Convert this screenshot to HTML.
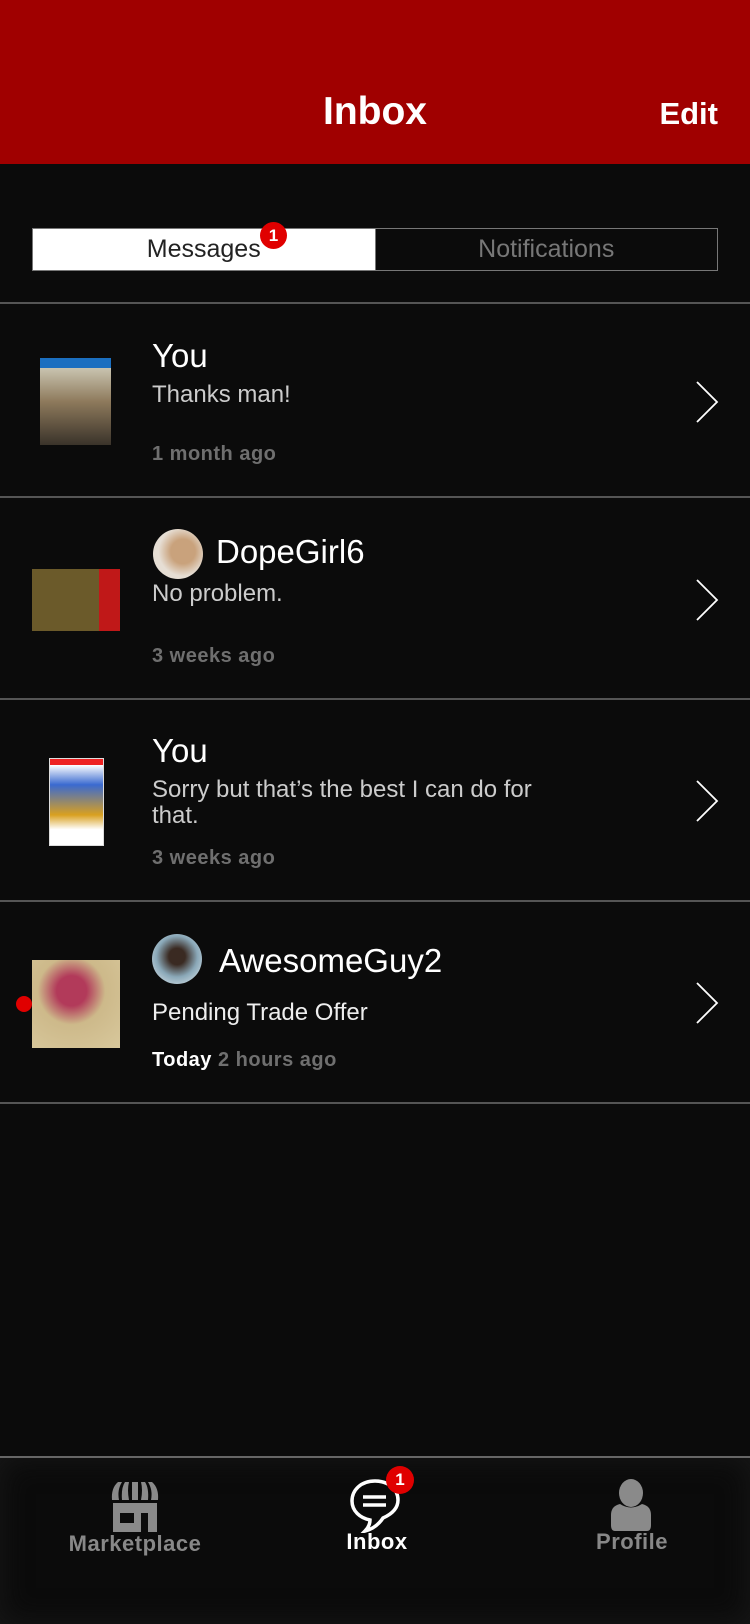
<!DOCTYPE html>
<html><head><meta charset="utf-8"><style>
*{margin:0;padding:0;box-sizing:border-box}
body{width:750px;height:1624px;background:#0b0b0b;font-family:"Liberation Sans",sans-serif;position:relative;overflow:hidden;color:#fff}
.abs{position:absolute}
.hdr{left:0;top:0;width:750px;height:164px;background:#a00000}
.title{left:0;width:750px;top:90px;text-align:center;font-size:39px;font-weight:bold}
.edit{right:32px;top:96px;font-size:31px;font-weight:bold}
.tabs{left:32px;top:228px;width:686px;height:43px;border:1px solid #777;display:flex}
.tab{flex:1;text-align:center;font-size:25px;line-height:41px}
.t1{background:#fff;color:#222}
.t2{color:#777;border-left:1px solid #777}
.badge{background:#e00000;border-radius:50%;color:#fff;font-weight:bold;text-align:center}
.hr{left:0;width:750px;height:2px;background:#555}
.name{font-size:33px;left:152px}
.sub{font-size:24px;color:#ccc;left:152px;line-height:26px}
.time{font-size:20px;font-weight:bold;color:#6f6f6f;left:152px;letter-spacing:.5px}
.chev{left:694px;width:26px;height:44px}
.av{border-radius:50%;width:50px;height:50px}
.nav{left:0;top:1458px;width:750px;height:166px;background:#0b0b0b;box-shadow:inset 0 0 30px #181818}
.lbl{font-size:22px;font-weight:bold;color:#888;text-align:center;width:200px;letter-spacing:.5px}
</style></head><body>
<div class="abs hdr"></div>
<div class="abs title">Inbox</div>
<div class="abs edit">Edit</div>
<div class="abs tabs"><div class="tab t1">Messages</div><div class="tab t2">Notifications</div></div>
<div class="abs badge" style="left:260px;top:222px;width:27px;height:27px;font-size:17px;line-height:27px">1</div>
<div class="abs hr" style="top:302px"></div>
<div class="abs hr" style="top:496px"></div>
<div class="abs hr" style="top:698px"></div>
<div class="abs hr" style="top:900px"></div>
<div class="abs hr" style="top:1102px"></div>

<!-- row1 -->
<div class="abs" style="left:40px;top:358px;width:71px;height:87px;background:linear-gradient(#1b6fc0 0 10px,#c9c4b0 10px,#8e7a5c 50%,#3a332a)"></div>
<div class="abs name" style="top:337px">You</div>
<div class="abs sub" style="top:382px">Thanks man!</div>
<div class="abs time" style="top:443px">1 month ago</div>
<svg class="abs chev" style="top:380px" viewBox="0 0 26 44"><path d="M3 2 L23 22 L3 42" fill="none" stroke="#fff" stroke-width="1.8"/></svg>

<!-- row2 -->
<div class="abs" style="left:32px;top:569px;width:88px;height:62px;background:linear-gradient(90deg,#6b5a2a 0 76%,#c01818 76%)"></div>
<div class="abs av" style="left:153px;top:529px;background:radial-gradient(circle at 60% 45%,#c9a27c 0 30%,#e6ded4 60%)"></div>
<div class="abs name" style="left:216px;top:533px">DopeGirl6</div>
<div class="abs sub" style="top:581px">No problem.</div>
<div class="abs time" style="top:645px">3 weeks ago</div>
<div class="abs" style="left:694px;top:578px"><svg class="chev" viewBox="0 0 26 44"><path d="M3 2 L23 22 L3 42" fill="none" stroke="#fff" stroke-width="1.8"/></svg></div>

<!-- row3 -->
<div class="abs" style="left:49px;top:758px;width:55px;height:88px;background:linear-gradient(#e22 0 6px,#fff 6px,#3a6ad0 30%,#d9a020 65%,#fff 82%);border:1px solid #ddd"></div>
<div class="abs name" style="top:732px">You</div>
<div class="abs sub" style="top:777px">Sorry but that’s the best I can do for<br>that.</div>
<div class="abs time" style="top:847px">3 weeks ago</div>
<div class="abs" style="left:694px;top:779px"><svg class="chev" viewBox="0 0 26 44"><path d="M3 2 L23 22 L3 42" fill="none" stroke="#fff" stroke-width="1.8"/></svg></div>

<!-- row4 -->
<div class="abs" style="left:16px;top:996px;width:16px;height:16px;border-radius:50%;background:#e00000"></div>
<div class="abs" style="left:32px;top:960px;width:88px;height:88px;background:radial-gradient(circle at 45% 35%,#b23a5a 0 20%,#cdb98a 45%,#d8c89c)"></div>
<div class="abs av" style="left:152px;top:934px;background:radial-gradient(circle at 50% 45%,#3a2a22 0 22%,#8aa8b8 55%,#e8eef2)"></div>
<div class="abs name" style="left:219px;top:942px">AwesomeGuy2</div>
<div class="abs sub" style="top:1000px;color:#eee">Pending Trade Offer</div>
<div class="abs time" style="top:1049px"><span style="color:#fff">Today</span> 2 hours ago</div>
<div class="abs" style="left:694px;top:981px"><svg class="chev" viewBox="0 0 26 44"><path d="M3 2 L23 22 L3 42" fill="none" stroke="#fff" stroke-width="1.8"/></svg></div>

<!-- nav -->
<div class="abs nav"></div>
<div class="abs hr" style="top:1456px;height:2px;background:#666"></div>
<svg class="abs" style="left:110px;top:1480px" width="50" height="52" viewBox="0 0 50 52">
<g fill="#8a8a8a"><path d="M2 20 Q1 8 8 2 L12 2 Q7 10 9 20 Z"/><path d="M12 20 Q11 8 15 2 L19 2 Q17 10 19 20 Z"/><path d="M22 20 L22 2 L28 2 L28 20 Z"/><path d="M31 20 Q33 10 31 2 L35 2 Q39 8 38 20 Z"/><path d="M41 20 Q43 10 38 2 L42 2 Q49 8 48 20 Z"/>
<path d="M3 23 H47 V52 H38 V33 H31 V52 H3 Z M10 33 V43 H24 V33 Z" fill-rule="evenodd"/></g></svg>
<div class="abs lbl" style="left:35px;top:1531px">Marketplace</div>
<svg class="abs" style="left:348px;top:1477px" width="54" height="56" viewBox="0 0 54 56">
<path d="M27 4 C13 4 4 13 4 24 C4 34 12 41 22 43 C22 47 20 51 17 54 C25 52 31 47 35 41 C44 37 50 31 50 23 C50 12 40 4 27 4 Z" fill="none" stroke="#fff" stroke-width="3.5"/>
<path d="M15 20 H38 M15 28 H38" stroke="#fff" stroke-width="3.5"/></svg>
<div class="abs badge" style="left:386px;top:1466px;width:28px;height:28px;font-size:17px;line-height:28px">1</div>
<div class="abs lbl" style="left:277px;top:1529px;color:#fff">Inbox</div>
<svg class="abs" style="left:611px;top:1479px" width="40" height="52" viewBox="0 0 40 52">
<g fill="#8a8a8a"><ellipse cx="20" cy="14" rx="12" ry="14"/><path d="M4 52 Q0 52 0 46 L0 36 Q0 27 9 25 Q20 32 31 25 Q40 27 40 36 L40 46 Q40 52 36 52 Z"/></g></svg>
<div class="abs lbl" style="left:532px;top:1529px">Profile</div>
</body></html>
